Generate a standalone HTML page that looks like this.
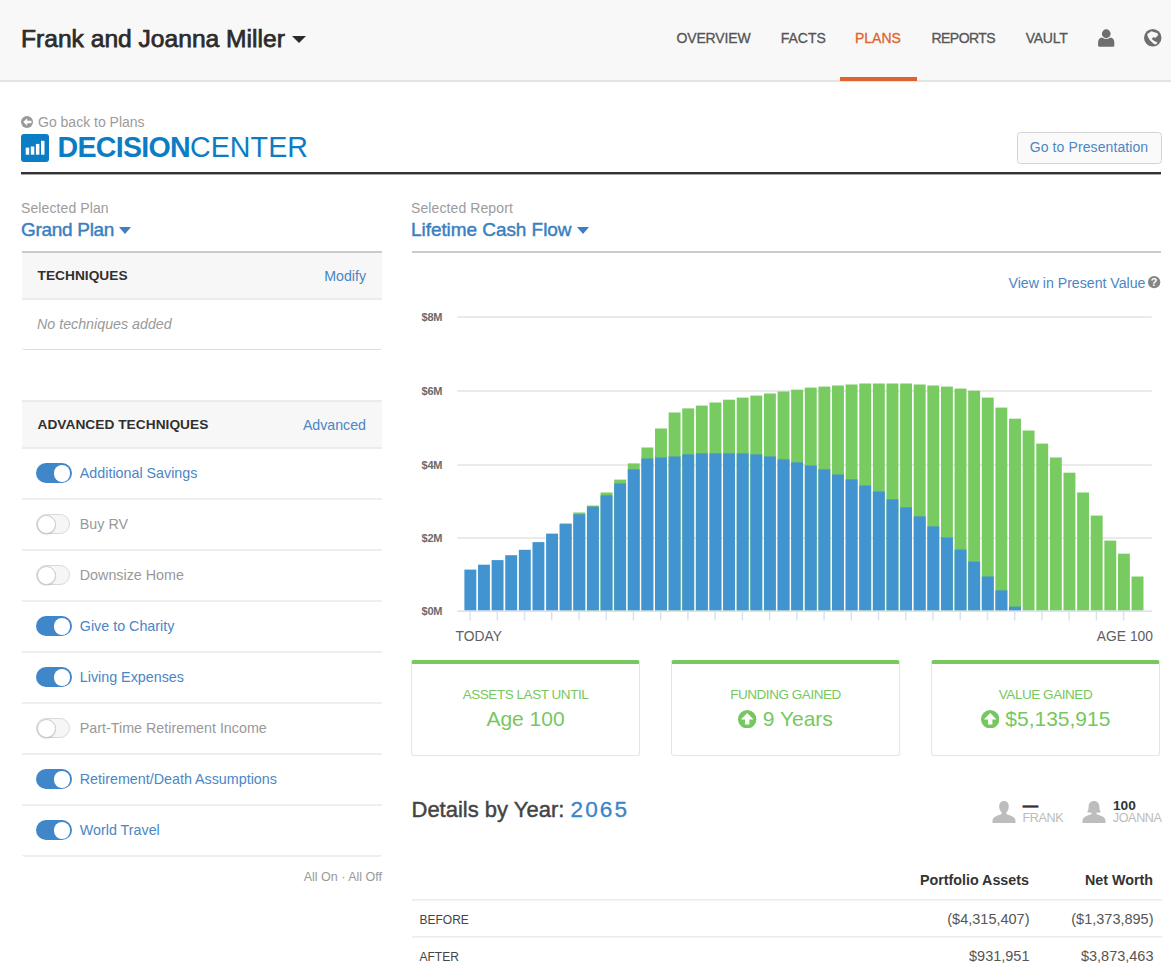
<!DOCTYPE html>
<html lang="en">
<head>
<meta charset="utf-8">
<title>Decision Center</title>
<style>
*{box-sizing:border-box;margin:0;padding:0}
html,body{width:1171px;height:973px;overflow:hidden;background:#fff}
body{font-family:"Liberation Sans",Arial,sans-serif;font-size:14px;color:#444;position:relative}
a{text-decoration:none;color:#4a86c5}
.abs{position:absolute;white-space:nowrap;line-height:1}

/* header */
#hdr{position:absolute;left:0;top:0;width:1171px;height:82px;background:#f8f8f8;border-bottom:2px solid #e4e4e4}
#client{left:21px;top:26.6px;font-size:24.6px;color:#2b2b2b;letter-spacing:0px;-webkit-text-stroke:0.75px #2b2b2b}
#client .car{display:inline-block;width:0;height:0;border-left:7.1px solid transparent;border-right:7.1px solid transparent;border-top:7.9px solid #2b2b2b;margin-left:7.5px;vertical-align:3.7px}
.nav{top:31px;font-size:14px;color:#555;-webkit-text-stroke:0.3px #555}
.nav.on{color:#e0622f;-webkit-text-stroke:0.3px #e0622f}
#navline{position:absolute;left:840px;top:77px;width:77px;height:4px;background:#e0622f}

/* title row */
#back{left:21px;top:114.5px;font-size:14px;color:#9b9b9b}
#logo{position:absolute;left:21.2px;top:134.3px;width:27.8px;height:28px;border-radius:3px;background:#0b7dc5}
#dc{left:57.5px;top:133.3px;font-size:28.6px;color:#0b7dc5;letter-spacing:-0.73px}
#dc b{font-weight:bold}
#dc span{letter-spacing:0.1px}
#pres{position:absolute;left:1017px;top:131.7px;letter-spacing:0.1px;width:145px;height:32px;border:1px solid #d4d4d4;border-radius:3.5px;background:#fafafa;color:#4a86c5;font-size:14px;line-height:29px;text-align:center;padding-right:1px}
#rule{position:absolute;left:21px;top:172px;width:1140px;height:3px;background:linear-gradient(#333 0,#333 2px,#a5a5a5 2px,#a5a5a5 3px)}

/* left column */
.lbl{font-size:14px;color:#9c9c9c;letter-spacing:0.1px}
.sel{font-size:19px;color:#3a7fc1;-webkit-text-stroke:0.45px #3a7fc1;letter-spacing:-0.3px}
.sel .car{display:inline-block;width:0;height:0;border-left:6.9px solid transparent;border-right:6.9px solid transparent;border-top:7.7px solid #3a7fc1;margin-left:5.2px;vertical-align:2.3px}
.panel{position:absolute;left:21.5px;width:360px}
.ph{height:47px;background:#f7f7f7;border-bottom:2px solid #ececec;position:relative}
.ph b{position:absolute;left:16px;top:15.6px;font-size:13.7px;line-height:1;color:#303030;letter-spacing:0.04px}
.ph a{position:absolute;right:15.5px;top:16px;font-size:14.2px;line-height:1}
.row{height:51px;border-bottom:2px solid #eeeeee;position:relative}
.row span.t{position:absolute;left:58.3px;top:17.4px;font-size:14.3px;line-height:1;color:#4a86c5;white-space:nowrap}
.row.off span.t{color:#999}
.tg{position:absolute;left:14.9px;top:14.4px;width:35.6px;height:20px;border-radius:10px;background:#3f87c9}
.tg i{position:absolute;right:1.6px;top:1.8px;width:16.4px;height:16.4px;border-radius:50%;background:#fff}
.off .tg{width:33.6px;background:#f6f6f6;border:1px solid #dadada}
.off .tg i{left:-0.6px;right:auto;top:-0.8px;width:19.4px;height:19.4px;border:1.6px solid #cbcbcb;box-shadow:0 1px 1px rgba(0,0,0,.12)}

/* right column */
#rline{position:absolute;left:411.5px;top:251px;width:749.8px;height:2px;background:#cbcbcb}
#pv{right:25.5px;top:275.8px;font-size:14.15px;color:#4a86c5}
#chart{position:absolute;left:0;top:0}
.stat{position:absolute;top:660px;width:229px;height:96px;border:1px solid #e6e6e6;border-top:4px solid #76c95f;border-radius:3px;text-align:center;color:#77c760}
.stat .a{position:absolute;left:0;right:0;top:23.5px;font-size:13.5px;line-height:1;letter-spacing:-0.45px}
.stat .b{position:absolute;left:0;right:0;top:44px;font-size:21px;line-height:1}
#dby{left:411.5px;top:798.7px;font-size:22px;color:#444;-webkit-text-stroke:0.45px #444}
#dby span{color:#3a85c8;-webkit-text-stroke:0.3px #3a85c8;font-size:22.6px;letter-spacing:2.1px}
.th{font-size:14.3px;font-weight:bold;color:#333}
.td{font-size:14.5px;color:#555}
.tl{position:absolute;left:411.5px;width:750px;height:2px;background:linear-gradient(#e7edf3 0,#e7edf3 1px,#f2f5f8 1px,#f2f5f8 2px)}
.rl{font-size:12px;color:#444}
.pn{font-size:12.6px;color:#bbb;letter-spacing:-0.35px}
.pv{font-size:13.7px;font-weight:bold;color:#333}
</style>
</head>
<body>
<div id="hdr">
  <div id="client" class="abs">Frank and Joanna Miller<span class="car"></span></div>
  <div class="abs nav" style="left:676.5px;letter-spacing:-0.15px">OVERVIEW</div>
  <div class="abs nav" style="left:780.7px">FACTS</div>
  <div class="abs nav on" style="left:855px">PLANS</div>
  <div class="abs nav" style="left:931.5px;letter-spacing:-0.55px">REPORTS</div>
  <div class="abs nav" style="left:1025.7px;letter-spacing:-0.25px">VAULT</div>
  <svg class="abs" style="left:1097px;top:29px" width="19" height="19" viewBox="0 0 19 19"><path d="M1.1 16.3 V13.5 Q1.1 8.5 6 8.5 H12.4 Q17.3 8.5 17.3 13.5 V16.3 Q17.3 17.8 15.8 17.8 H2.6 Q1.1 17.8 1.1 16.3 Z" fill="#6e6e6e"/><circle cx="9.25" cy="4.75" r="5.3" fill="#f8f8f8"/><circle cx="9.25" cy="4.75" r="4.4" fill="#6e6e6e"/></svg>
  <svg class="abs" style="left:1143.8px;top:29.4px" width="18" height="18" viewBox="0 0 18 18"><circle cx="8.75" cy="8.75" r="8.75" fill="#6e6e6e"/><path d="M3.3 4.9 L7.35 2.35 L13.6 4.2 L14 6.4 L11 9 L9.6 7.9 L7.7 10.1 L10.3 11.9 L13.6 13.4 L11.8 15.6 L9.9 14.9 L5.9 11.2 L3.7 7.5 Z" fill="#f8f8f8"/></svg>
  <div id="navline"></div>
</div>

<div id="back" class="abs"><svg width="12" height="12" viewBox="0 0 12 12" style="vertical-align:-1px;margin-right:5px"><circle cx="6" cy="6" r="6" fill="#999"/><path d="M6.2 2.2 L2.2 6 L6.2 9.8 L6.2 7.3 L10.4 7.3 L10.4 4.7 L6.2 4.7 Z" fill="#fff"/></svg>Go back to Plans</div>
<div id="logo"><svg width="28" height="28" viewBox="0 0 28 28"><rect x="4.7" y="13.6" width="3.5" height="7.1" fill="#fff"/><rect x="9.8" y="12.5" width="3.5" height="8.2" fill="#fff"/><rect x="14.9" y="9.9" width="3.5" height="10.8" fill="#fff"/><rect x="20" y="6.8" width="3.5" height="13.9" fill="#fff"/></svg></div>
<div id="dc" class="abs"><b>DECISION</b><span>CENTER</span></div>
<div id="pres">Go to Presentation</div>
<div id="rule"></div>

<div class="abs lbl" style="left:21px;top:201.3px">Selected Plan</div>
<div class="abs sel" style="left:21px;top:220px">Grand Plan<span class="car"></span></div>

<div class="panel" style="top:251px;border-top:2px solid #cbcbcb;border-bottom:1px solid #dedede;border-radius:0 0 3px 3px;height:99px">
  <div class="ph" style="height:47px"><b>TECHNIQUES</b><a>Modify</a></div>
  <div class="abs" style="left:15.5px;top:63.7px;font-size:14.25px;font-style:italic;color:#999">No techniques added</div>
</div>

<div class="panel" style="top:400px;border-top:2px solid #ececec">
  <div class="ph" style="height:47px"><b>ADVANCED TECHNIQUES</b><a>Advanced</a></div>
  <div class="row"><span class="tg"><i></i></span><span class="t">Additional Savings</span></div>
  <div class="row off"><span class="tg"><i></i></span><span class="t">Buy RV</span></div>
  <div class="row off"><span class="tg"><i></i></span><span class="t">Downsize Home</span></div>
  <div class="row"><span class="tg"><i></i></span><span class="t">Give to Charity</span></div>
  <div class="row"><span class="tg"><i></i></span><span class="t">Living Expenses</span></div>
  <div class="row off"><span class="tg"><i></i></span><span class="t">Part-Time Retirement Income</span></div>
  <div class="row"><span class="tg"><i></i></span><span class="t">Retirement/Death Assumptions</span></div>
  <div class="row" style="border-radius:0 0 3px 3px"><span class="tg"><i></i></span><span class="t">World Travel</span></div>
</div>
<div class="abs" style="right:789px;top:871px;font-size:12.5px;color:#999">All On &middot; All Off</div>

<div class="abs lbl" style="left:411px;top:201.3px">Selected Report</div>
<div class="abs sel" style="left:411px;top:220px;letter-spacing:-0.06px">Lifetime Cash Flow<span class="car"></span></div>
<div id="rline"></div>
<div id="pv" class="abs">View in Present Value</div>
<svg class="abs" style="left:1148.4px;top:276.4px" width="12.3" height="12.3" viewBox="0 0 11 11"><circle cx="5.5" cy="5.5" r="5.5" fill="#858585"/><text x="5.5" y="9.1" font-size="9.6" font-weight="bold" fill="#fff" text-anchor="middle" font-family="Liberation Sans, sans-serif">?</text></svg>

<!--CHART-START-->
<svg id="chart" width="1171" height="973" viewBox="0 0 1171 973" style="pointer-events:none">
<rect x="457.3" y="316.10" width="694.5" height="1.8" fill="#e8e8e8"/>
<text x="421.5" y="321.4" font-family="Liberation Sans, Arial, sans-serif" font-size="11" font-weight="bold" fill="#6b6b6b" letter-spacing="-0.2">$8M</text>
<rect x="457.3" y="390.10" width="694.5" height="1.8" fill="#e8e8e8"/>
<text x="421.5" y="395.4" font-family="Liberation Sans, Arial, sans-serif" font-size="11" font-weight="bold" fill="#6b6b6b" letter-spacing="-0.2">$6M</text>
<rect x="457.3" y="464.15" width="694.5" height="1.8" fill="#e8e8e8"/>
<text x="421.5" y="469.4" font-family="Liberation Sans, Arial, sans-serif" font-size="11" font-weight="bold" fill="#6b6b6b" letter-spacing="-0.2">$4M</text>
<rect x="457.3" y="537.15" width="694.5" height="1.8" fill="#e8e8e8"/>
<text x="421.5" y="542.4" font-family="Liberation Sans, Arial, sans-serif" font-size="11" font-weight="bold" fill="#6b6b6b" letter-spacing="-0.2">$2M</text>
<text x="421.5" y="615.4" font-family="Liberation Sans, Arial, sans-serif" font-size="11" font-weight="bold" fill="#6b6b6b" letter-spacing="-0.2">$0M</text>
<g fill="#77cb61"><rect x="559.71" y="523.4" width="11.9" height="87.1"/><rect x="573.33" y="512.5" width="11.9" height="98.0"/><rect x="586.94" y="505.6" width="11.9" height="104.9"/><rect x="600.56" y="492.5" width="11.9" height="118.0"/><rect x="614.18" y="479.6" width="11.9" height="130.9"/><rect x="627.79" y="463.4" width="11.9" height="147.1"/><rect x="641.41" y="447.5" width="11.9" height="163.0"/><rect x="655.02" y="428.5" width="11.9" height="182.0"/><rect x="668.64" y="412.5" width="11.9" height="198.0"/><rect x="682.26" y="408.4" width="11.9" height="202.1"/><rect x="695.87" y="405.6" width="11.9" height="204.9"/><rect x="709.49" y="402.5" width="11.9" height="208.0"/><rect x="723.10" y="399.7" width="11.9" height="210.8"/><rect x="736.72" y="397.6" width="11.9" height="212.9"/><rect x="750.34" y="395.6" width="11.9" height="214.9"/><rect x="763.95" y="393.5" width="11.9" height="217.0"/><rect x="777.57" y="391.5" width="11.9" height="219.0"/><rect x="791.18" y="389.7" width="11.9" height="220.8"/><rect x="804.80" y="387.6" width="11.9" height="222.9"/><rect x="818.42" y="386.6" width="11.9" height="223.9"/><rect x="832.03" y="385.5" width="11.9" height="225.0"/><rect x="845.65" y="384.5" width="11.9" height="226.0"/><rect x="859.26" y="383.5" width="11.9" height="227.0"/><rect x="872.88" y="383.5" width="11.9" height="227.0"/><rect x="886.50" y="383.5" width="11.9" height="227.0"/><rect x="900.11" y="383.5" width="11.9" height="227.0"/><rect x="913.73" y="384.5" width="11.9" height="226.0"/><rect x="927.34" y="385.5" width="11.9" height="225.0"/><rect x="940.96" y="386.6" width="11.9" height="223.9"/><rect x="954.58" y="388.6" width="11.9" height="221.9"/><rect x="968.19" y="390.7" width="11.9" height="219.8"/><rect x="981.81" y="397.6" width="11.9" height="212.9"/><rect x="995.42" y="407.6" width="11.9" height="202.9"/><rect x="1009.04" y="418.7" width="11.9" height="191.8"/><rect x="1022.66" y="430.5" width="11.9" height="180.0"/><rect x="1036.27" y="443.6" width="11.9" height="166.9"/><rect x="1049.89" y="457.5" width="11.9" height="153.0"/><rect x="1063.50" y="472.7" width="11.9" height="137.8"/><rect x="1077.12" y="492.5" width="11.9" height="118.0"/><rect x="1090.74" y="515.6" width="11.9" height="94.9"/><rect x="1104.35" y="540.6" width="11.9" height="69.9"/><rect x="1117.97" y="553.7" width="11.9" height="56.8"/><rect x="1131.58" y="576.5" width="11.9" height="34.0"/></g>
<g fill="#4194cf"><rect x="464.40" y="569.6" width="11.9" height="40.9"/><rect x="478.02" y="564.7" width="11.9" height="45.8"/><rect x="491.63" y="560.1" width="11.9" height="50.4"/><rect x="505.25" y="555.2" width="11.9" height="55.3"/><rect x="518.86" y="549.8" width="11.9" height="60.7"/><rect x="532.48" y="542.1" width="11.9" height="68.4"/><rect x="546.10" y="533.6" width="11.9" height="76.9"/><rect x="559.71" y="524.1" width="11.9" height="86.4"/><rect x="573.33" y="514.3" width="11.9" height="96.2"/><rect x="586.94" y="506.6" width="11.9" height="103.9"/><rect x="600.56" y="495.3" width="11.9" height="115.2"/><rect x="614.18" y="483.5" width="11.9" height="127.0"/><rect x="627.79" y="469.3" width="11.9" height="141.2"/><rect x="641.41" y="458.5" width="11.9" height="152.0"/><rect x="655.02" y="457.5" width="11.9" height="153.0"/><rect x="668.64" y="456.5" width="11.9" height="154.0"/><rect x="682.26" y="454.4" width="11.9" height="156.1"/><rect x="695.87" y="453.4" width="11.9" height="157.1"/><rect x="709.49" y="453.4" width="11.9" height="157.1"/><rect x="723.10" y="453.4" width="11.9" height="157.1"/><rect x="736.72" y="453.4" width="11.9" height="157.1"/><rect x="750.34" y="454.4" width="11.9" height="156.1"/><rect x="763.95" y="456.5" width="11.9" height="154.0"/><rect x="777.57" y="459.3" width="11.9" height="151.2"/><rect x="791.18" y="462.4" width="11.9" height="148.1"/><rect x="804.80" y="465.5" width="11.9" height="145.0"/><rect x="818.42" y="469.3" width="11.9" height="141.2"/><rect x="832.03" y="474.5" width="11.9" height="136.0"/><rect x="845.65" y="479.4" width="11.9" height="131.1"/><rect x="859.26" y="485.5" width="11.9" height="125.0"/><rect x="872.88" y="491.5" width="11.9" height="119.0"/><rect x="886.50" y="499.4" width="11.9" height="111.1"/><rect x="900.11" y="507.4" width="11.9" height="103.1"/><rect x="913.73" y="516.4" width="11.9" height="94.1"/><rect x="927.34" y="526.4" width="11.9" height="84.1"/><rect x="940.96" y="537.5" width="11.9" height="73.0"/><rect x="954.58" y="549.6" width="11.9" height="60.9"/><rect x="968.19" y="561.6" width="11.9" height="48.9"/><rect x="981.81" y="576.5" width="11.9" height="34.0"/><rect x="995.42" y="590.4" width="11.9" height="20.1"/><rect x="1009.04" y="606.6" width="11.9" height="3.9"/></g>
<rect x="457.3" y="610.5" width="694.5" height="1.3" fill="#d3dbec"/>
<g fill="#d9e0ee"><rect x="469.35" y="611" width="1.4" height="9.5"/><rect x="496.58" y="611" width="1.4" height="9.5"/><rect x="523.81" y="611" width="1.4" height="9.5"/><rect x="551.05" y="611" width="1.4" height="9.5"/><rect x="578.28" y="611" width="1.4" height="9.5"/><rect x="605.51" y="611" width="1.4" height="9.5"/><rect x="632.74" y="611" width="1.4" height="9.5"/><rect x="659.97" y="611" width="1.4" height="9.5"/><rect x="687.21" y="611" width="1.4" height="9.5"/><rect x="714.44" y="611" width="1.4" height="9.5"/><rect x="741.67" y="611" width="1.4" height="9.5"/><rect x="768.90" y="611" width="1.4" height="9.5"/><rect x="796.13" y="611" width="1.4" height="9.5"/><rect x="823.37" y="611" width="1.4" height="9.5"/><rect x="850.60" y="611" width="1.4" height="9.5"/><rect x="877.83" y="611" width="1.4" height="9.5"/><rect x="905.06" y="611" width="1.4" height="9.5"/><rect x="932.29" y="611" width="1.4" height="9.5"/><rect x="959.53" y="611" width="1.4" height="9.5"/><rect x="986.76" y="611" width="1.4" height="9.5"/><rect x="1013.99" y="611" width="1.4" height="9.5"/><rect x="1041.22" y="611" width="1.4" height="9.5"/><rect x="1068.45" y="611" width="1.4" height="9.5"/><rect x="1095.69" y="611" width="1.4" height="9.5"/><rect x="1122.92" y="611" width="1.4" height="9.5"/></g>
<text x="455.5" y="640.5" font-family="Liberation Sans, Arial, sans-serif" font-size="13.85" fill="#606060">TODAY</text>
<text x="1153" y="640.5" text-anchor="end" font-family="Liberation Sans, Arial, sans-serif" font-size="13.85" fill="#606060">AGE 100</text>
</svg>
<!--CHART-END-->

<div class="stat" style="left:411px"><div class="a">ASSETS LAST UNTIL</div><div class="b">Age 100</div></div>
<div class="stat" style="left:671px"><div class="a">FUNDING GAINED</div><div class="b"><svg width="18.4" height="18.4" viewBox="0 0 18.4 18.4" style="vertical-align:-2.3px;margin-right:6.3px"><circle cx="9.2" cy="9.2" r="9.2" fill="#77c760"/><path d="M9.2 3.1 L2.9 9.6 L7 9.6 L7 14.6 L11.4 14.6 L11.4 9.6 L15.5 9.6 Z" fill="#fff"/></svg>9 Years</div></div>
<div class="stat" style="left:931px"><div class="a">VALUE GAINED</div><div class="b"><svg width="18.4" height="18.4" viewBox="0 0 18.4 18.4" style="vertical-align:-2.3px;margin-right:6.3px"><circle cx="9.2" cy="9.2" r="9.2" fill="#77c760"/><path d="M9.2 3.1 L2.9 9.6 L7 9.6 L7 14.6 L11.4 14.6 L11.4 9.6 L15.5 9.6 Z" fill="#fff"/></svg>$5,135,915</div></div>

<div id="dby" class="abs">Details by Year: <span>2065</span></div>

<svg class="abs" style="left:992px;top:801px" width="24" height="22" viewBox="0 0 24 22"><path d="M12 0 C15.2 0 16.8 2.4 16.8 5.4 C16.8 8.2 15.6 10.2 14.4 11.2 L14.4 13 C17 14.2 23.5 15.6 23.5 19.5 L23.5 22 L0.5 22 L0.5 19.5 C0.5 15.6 7 14.2 9.6 13 L9.6 11.2 C8.4 10.2 7.2 8.2 7.2 5.4 C7.2 2.4 8.8 0 12 0 Z" fill="#bdbdbd"/></svg>
<div class="abs pv" style="left:1022.8px;top:797.6px;font-size:15.4px;-webkit-text-stroke:0.5px #333">&mdash;</div>
<div class="abs pn" style="left:1022.4px;top:812px">FRANK</div>
<svg class="abs" style="left:1082px;top:801px" width="24" height="22" viewBox="0 0 24 22"><path d="M12 0 C15.6 0 17.4 2.6 17.4 6 C17.4 8.4 18 10 19 11 C17.6 11.8 15.6 12 14.4 11.6 L14.4 13 C17 14.2 23.5 15.6 23.5 19.5 L23.5 22 L0.5 22 L0.5 19.5 C0.5 15.6 7 14.2 9.6 13 L9.6 11.6 C8.4 12 6.4 11.8 5 11 C6 10 6.6 8.4 6.6 6 C6.6 2.6 8.4 0 12 0 Z" fill="#bdbdbd"/></svg>
<div class="abs pv" style="left:1113px;top:799px">100</div>
<div class="abs pn" style="left:1112.7px;top:812px">JOANNA</div>

<div class="abs th" style="right:142px;top:873.3px">Portfolio Assets</div>
<div class="abs th" style="right:18px;top:873.3px">Net Worth</div>
<div class="tl" style="top:899px"></div>
<div class="abs rl" style="left:419.5px;top:913.7px">BEFORE</div>
<div class="abs td" style="right:141.5px;top:911.5px">($4,315,407)</div>
<div class="abs td" style="right:17.5px;top:911.5px">($1,373,895)</div>
<div class="tl" style="top:936px"></div>
<div class="abs rl" style="left:419.5px;top:950.7px">AFTER</div>
<div class="abs td" style="right:141.5px;top:948.7px">$931,951</div>
<div class="abs td" style="right:17.5px;top:948.7px">$3,873,463</div>
</body>
</html>
